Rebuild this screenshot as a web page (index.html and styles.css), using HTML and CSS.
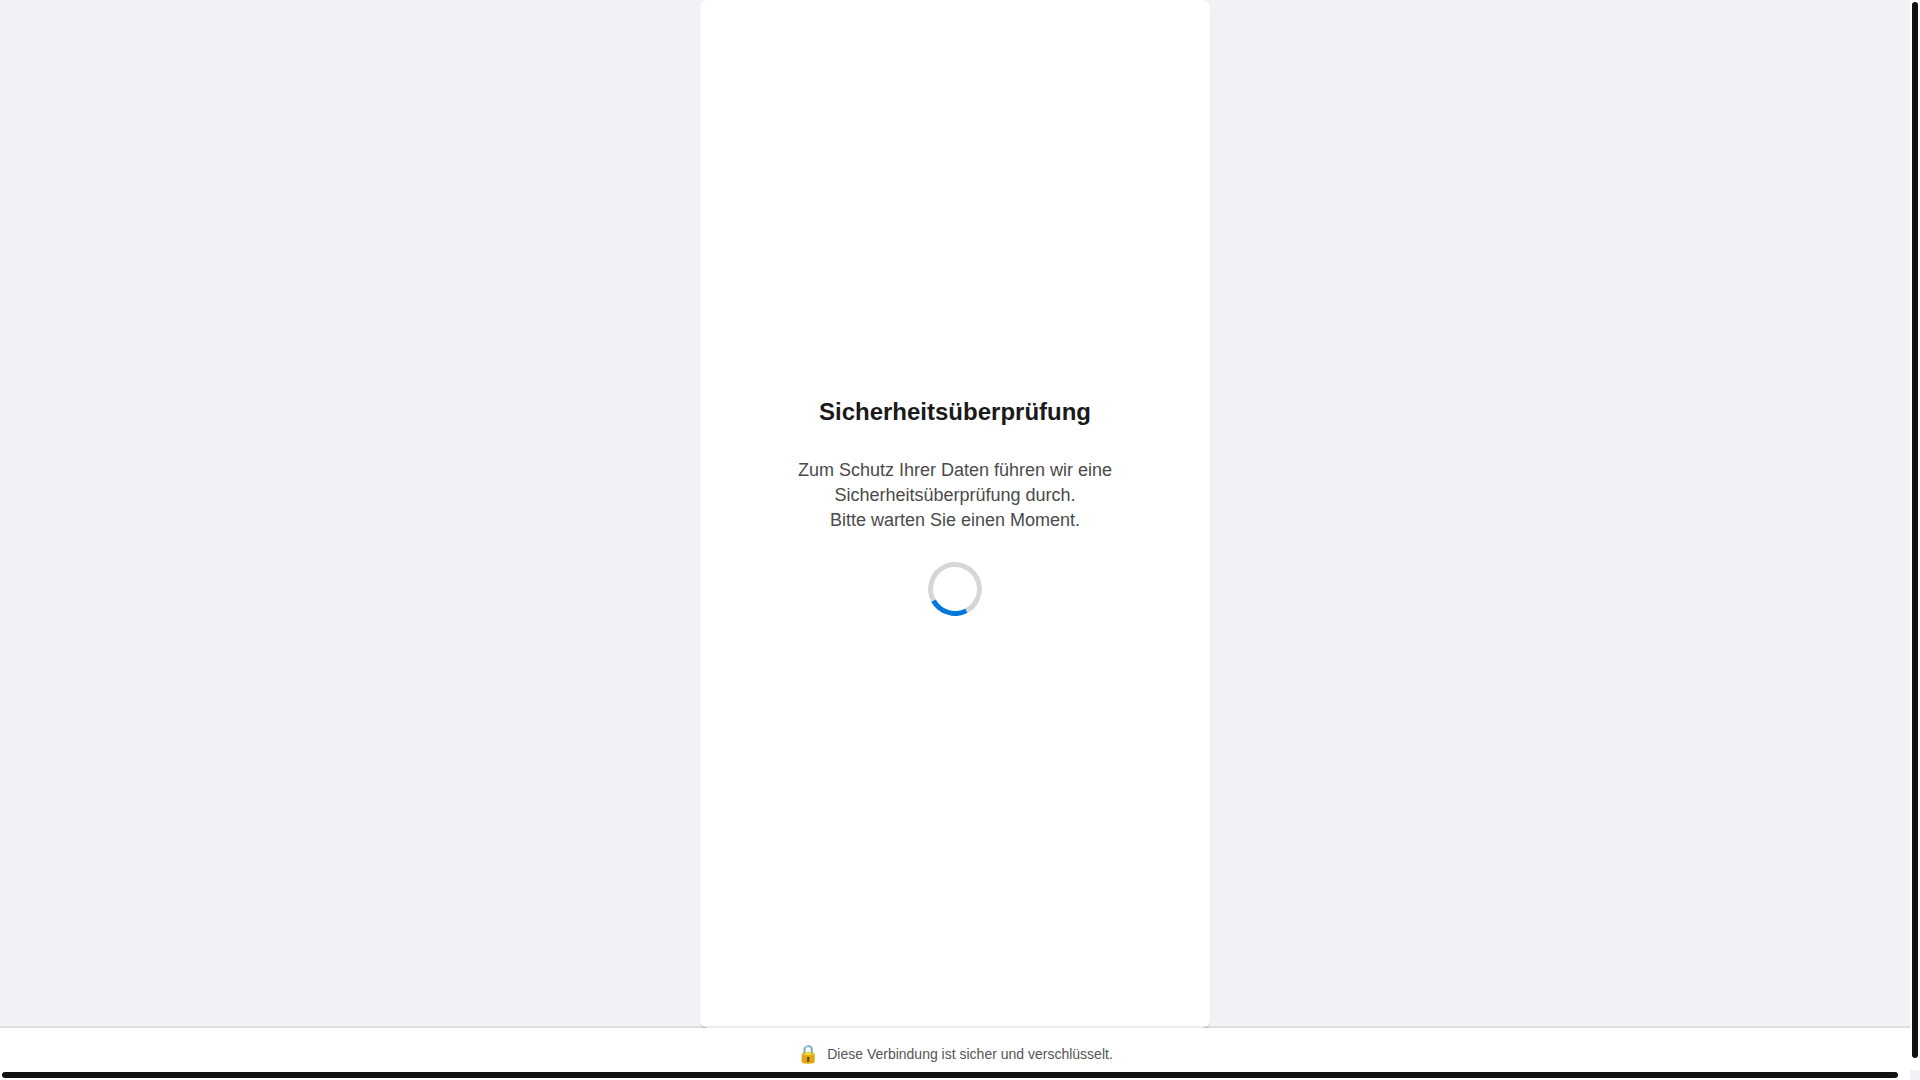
FILE: index.html
```
<!DOCTYPE html>
<html lang="de">
<head>
    <meta charset="UTF-8">
    <meta name="viewport" content="width=device-width, initial-scale=1.0">
    <title>Sicherheitsüberprüfung</title>
    <link rel="stylesheet" href="styles.css">
</head>
<body>
    <div class="page">
        <main class="content">
            <div class="card">
                <h1>Sicherheitsüberprüfung</h1>
                <p>Zum Schutz Ihrer Daten führen wir eine Sicherheitsüberprüfung durch.<br>Bitte warten Sie einen Moment.</p>
                <div class="spinner" role="status" aria-label="Wird geladen"></div>
            </div>
        </main>

        <footer class="footer">
            <span class="lock">🔒</span>
            <span>Diese Verbindung ist sicher und verschlüsselt.</span>
        </footer>
    </div>

    <!-- Scrollbars -->
    <div class="scrollbar scrollbar-y"><div class="thumb"></div></div>
    <div class="scrollbar scrollbar-x"><div class="thumb"></div></div>
</body>
</html>
```

FILE: styles.css
```
* {
    box-sizing: border-box;
}

body {
    font-family: "Liberation Sans", Arial, sans-serif;
    background-color: #f0f2f6;
    margin: 0;
    overflow: hidden;
}

.page {
    display: flex;
    flex-direction: column;
    height: 100vh;
    padding-right: 10px;
}

.content {
    flex: 1;
    display: flex;
    justify-content: center;
}

.card {
    display: flex;
    flex-direction: column;
    align-items: center;
    justify-content: center;
    width: 100%;
    max-width: 510px;
    padding: 0 80px 15px;
    background-color: #fff;
    border-radius: 8px;
    box-shadow: 0 4px 4px -4px rgba(0, 0, 0, 0.8);
    text-align: center;
}

h1 {
    margin: 0 0 32px;
    font-size: 24px;
    line-height: 28px;
    color: #1a1a1a;
}

p {
    margin: 0 0 29px;
    font-size: 18px;
    line-height: 25px;
    color: #4a4a4a;
}

.spinner {
    width: 54px;
    height: 54px;
    border: 5px solid #d6d6d6;
    border-top-color: #0078db;
    border-radius: 50%;
    transform: rotate(197deg);
}

/* The border lies over the lower edge of the card */
.footer {
    position: relative;
    display: flex;
    align-items: center;
    justify-content: center;
    gap: 8px;
    height: 54px;
    margin-top: -2px;
    border-top: 2px solid rgba(0, 0, 0, 0.08);
    background-color: #fff;
    background-clip: padding-box;
    font-size: 14px;
    color: #555;
}

.lock {
    font-size: 18px;
}

.scrollbar {
    position: absolute;
    padding: 2px;
    background-color: #fff;
}

.scrollbar-y {
    top: 0;
    right: 0;
    bottom: 10px;
    width: 10px;
    padding-bottom: 12px;
}

.scrollbar-x {
    left: 0;
    right: 10px;
    bottom: 0;
    height: 10px;
    padding-right: 12px;
}

.thumb {
    height: 100%;
    background-color: #111;
    border-radius: 3px;
}
```
